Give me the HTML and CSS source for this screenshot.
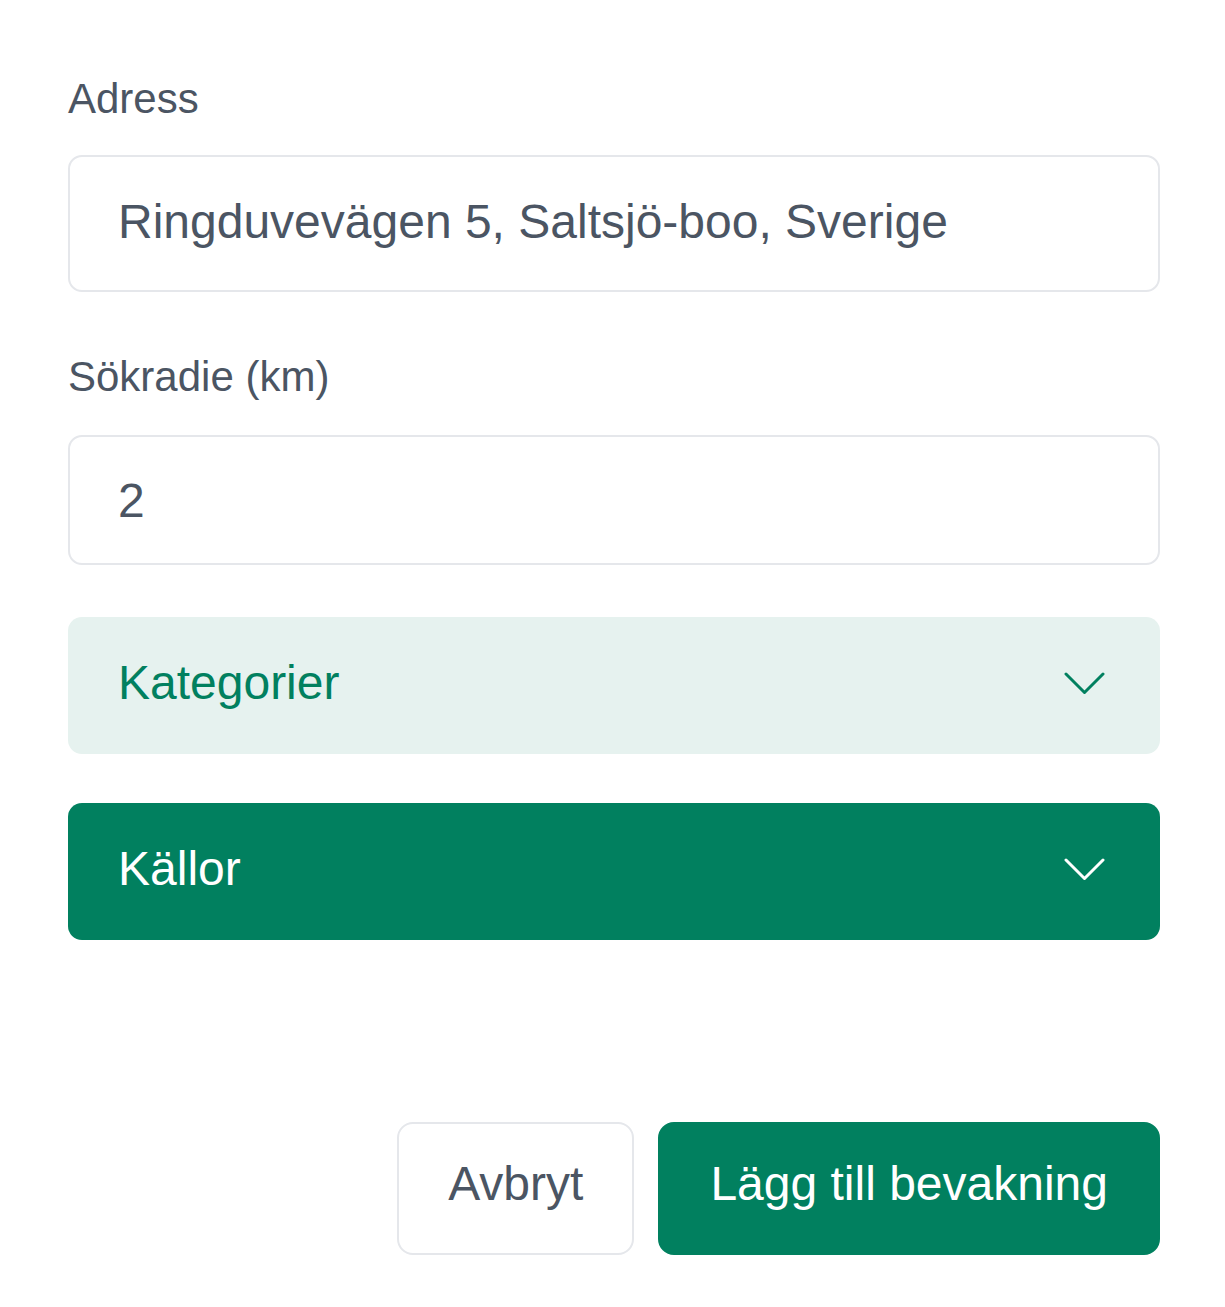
FILE: index.html
```html
<!DOCTYPE html>
<html lang="sv">
<head>
<meta charset="utf-8">
<title>Lägg till bevakning</title>
<link rel="stylesheet" href="styles.css">
</head>
<body>
<form class="form">
  <div class="label label-first">Adress</div>
  <div class="field field-address">Ringduvevägen 5, Saltsjö-boo, Sverige</div>

  <div class="label label-second">Sökradie (km)</div>
  <div class="field field-radius">2</div>

  <div class="accordion accordion-light">
    <span class="accordion-title">Kategorier</span>
    <svg class="chevron" width="41" height="23" viewBox="0 0 41 23" aria-hidden="true"><polyline points="2,2 20.5,20.5 39,2" fill="none" stroke="currentColor" stroke-width="3" stroke-linecap="round" stroke-linejoin="round"/></svg>
  </div>

  <div class="accordion accordion-dark">
    <span class="accordion-title">Källor</span>
    <svg class="chevron" width="41" height="23" viewBox="0 0 41 23" aria-hidden="true"><polyline points="2,2 20.5,20.5 39,2" fill="none" stroke="currentColor" stroke-width="3" stroke-linecap="round" stroke-linejoin="round"/></svg>
  </div>

  <div class="actions">
    <button type="button" class="btn btn-cancel">Avbryt</button>
    <button type="button" class="btn btn-primary">Lägg till bevakning</button>
  </div>
</form>
</body>
</html>
```
FILE: styles.css
```css
html, body {
  margin: 0;
  padding: 0;
  background: #ffffff;
}

body {
  font-family: "Liberation Sans", Arial, sans-serif;
  color: #4b5563;
}

.form {
  width: 1092px;
  margin-left: 68px;
  padding-top: 78px;
  display: flex;
  flex-direction: column;
}

.label {
  font-size: 42px;
  line-height: 42px;
  color: #4b5563;
}

.label-first {
  margin-bottom: 35px;
}

.label-second {
  margin-top: 64px;
  margin-bottom: 37px;
}

.field {
  box-sizing: border-box;
  border: 2px solid #e5e7eb;
  border-radius: 14px;
  padding-left: 48px;
  font-size: 48px;
  line-height: 48px;
  color: #4b5563;
  background: #ffffff;
}

.field-address {
  height: 137px;
  padding-top: 41px;
}

.field-radius {
  height: 130px;
  padding-top: 40px;
}

.accordion {
  box-sizing: border-box;
  height: 137px;
  border-radius: 14px;
  padding: 42px 55px 47px 50px;
  display: flex;
  align-items: center;
  justify-content: space-between;
  font-size: 48px;
  line-height: 48px;
}

.accordion-light {
  margin-top: 52px;
  background: #e6f2ef;
  color: #01805f;
}

.accordion-dark {
  margin-top: 49px;
  background: #01805f;
  color: #ffffff;
}

.chevron {
  display: block;
  flex: none;
}

.actions {
  margin-top: 182px;
  display: flex;
  justify-content: flex-end;
  gap: 24px;
}

.btn {
  box-sizing: border-box;
  height: 133px;
  border-radius: 16px;
  border: 2px solid #e5e7eb;
  padding: 36px 49px 45px;
  font-family: "Liberation Sans", Arial, sans-serif;
  font-size: 48px;
  line-height: 48px;
  cursor: pointer;
  display: block;
}

.btn-cancel {
  background: #ffffff;
  color: #4b5563;
}

.btn-primary {
  background: #01805f;
  border-color: #01805f;
  color: #ffffff;
  padding-left: 50px;
  padding-right: 50px;
}
```
